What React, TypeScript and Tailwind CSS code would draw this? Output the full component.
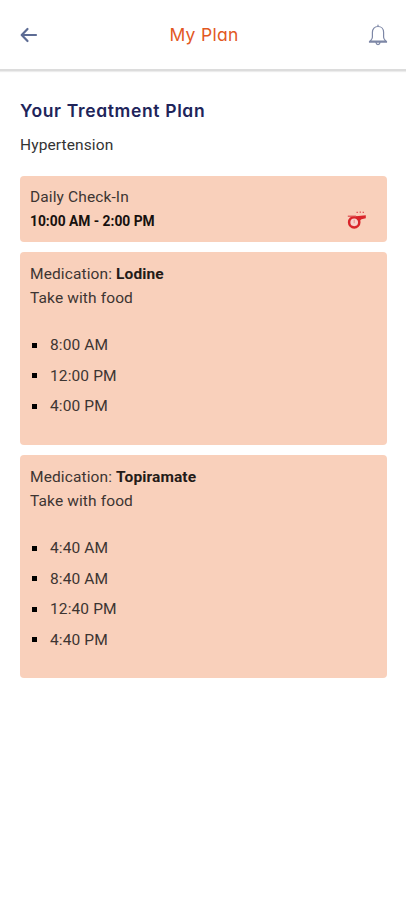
import React from 'react';

const ROBOTO = "font-['Roboto','Liberation_Sans',sans-serif]";

type Medication = { name: string; note: string; times: string[]; size: string };

const medications: Medication[] = [
  { name: 'Lodine', note: 'Take with food', times: ['8:00 AM', '12:00 PM', '4:00 PM'], size: 'h-[193px]' },
  { name: 'Topiramate', note: 'Take with food', times: ['4:40 AM', '8:40 AM', '12:40 PM', '4:40 PM'], size: 'h-[223px]' },
];

function BackArrow() {
  return (
    <svg width="18" height="16" viewBox="0 0 18 16" fill="none" stroke="#5d6c94" strokeWidth="2.2" strokeLinecap="round" strokeLinejoin="round">
      <path d="M16 8H2M7.500 2L1.700 8l5.800 6" />
    </svg>
  );
}

function Bell() {
  return (
    <svg width="20" height="22" viewBox="0 0 20 22" fill="none" stroke="#7d87a6" strokeWidth="1.2" strokeLinecap="round" strokeLinejoin="round">
      <path d="M10 1v1.500M10 2.500c-3.400 0-5.600 2.500-5.600 5.800v4.900c0 1.600-.8 2.500-2.400 4h16c-1.600-1.500-2.400-2.400-2.400-4V8.300c0-3.300-2.200-5.800-5.600-5.800zM1.500 17.400v.8h17v-.8M8 18.700c.2 1.300 1 1.900 2 1.900s1.800-.6 2-1.900" />
    </svg>
  );
}

function Whistle() {
  return (
    <svg width="20" height="20" viewBox="0 0 20 20" fill="none" stroke="#d9252b">
      <circle cx="7.200" cy="12.300" r="5.100" strokeWidth="2.500" fill="#f8d3cc" />
      <path d="M7.200 9.800v3.500" stroke="#ee9a96" strokeWidth="1.200" />
      <path d="M9 6.200l9.800-.9v3l-4.300.9-2.500 2L9 8.500z" fill="#d9252b" stroke="none" />
      <path d="M.8 6.200H9" stroke="#dc4a4c" strokeWidth="1.200" />
      <path d="M9.500 2.400h1.400M12.600 2.100H14M15.600 2.400H17" stroke="#e05458" strokeWidth="1.300" />
    </svg>
  );
}

export default function App() {
  return (
    <main className={`min-h-[900px] w-full bg-white text-[15.5px] leading-6 tracking-[0.12px] text-[#3d3532] ${ROBOTO}`}>
      <header className="flex h-[71px] items-center justify-between border-b-[2px] border-[#dcdcdc] pr-[18px] pl-5 pt-px shadow-[0_1px_1px_#ececec]">
        <div className="w-5"><BackArrow /></div>
        <h1 className="font-['Inter','Lato',sans-serif] text-[17.5px] tracking-[0.3px] text-[#e2581f] [font-feature-settings:'cv11']">My Plan</h1>
        <Bell />
      </header>
      <section className="px-5 pt-[28px] pr-[19px]">
        <h2 className="font-['Inter','Lato',sans-serif] text-[17.5px] font-semibold leading-6 tracking-[0.65px] whitespace-nowrap text-[#20245a] [font-feature-settings:'cv11']">Your Treatment Plan</h2>
        <p className="mt-[10px] text-[#333]">Hypertension</p>
        <div className="mt-[19px] flex flex-col gap-2.5">
          <article className="flex h-[66px] items-start justify-between rounded bg-[#f9d0bb] px-2.5 pt-[9px]">
            <div>
              <p>Daily Check-In</p>
              <p className="text-[13.8px] font-bold tracking-normal text-[#17110e]">10:00 AM - 2:00 PM</p>
            </div>
            <div className="mt-[25px] mr-2.5"><Whistle /></div>
          </article>
          {medications.map((m) => (
            <article key={m.name} className={`rounded bg-[#f9d0bb] px-2.5 pt-2.5 ${m.size}`}>
              <p>Medication: <strong className="font-bold text-[#241b18]">{m.name}</strong></p>
              <p>{m.note}</p>
              <ul className="mt-5">
                {m.times.map((t) => (
                  <li key={t} className="flex h-[30.500px] items-center gap-[13px] pl-0.5">
                    <span className="size-[5px] bg-black" />
                    <span>{t}</span>
                  </li>
                ))}
              </ul>
            </article>
          ))}
        </div>
      </section>
    </main>
  );
}
